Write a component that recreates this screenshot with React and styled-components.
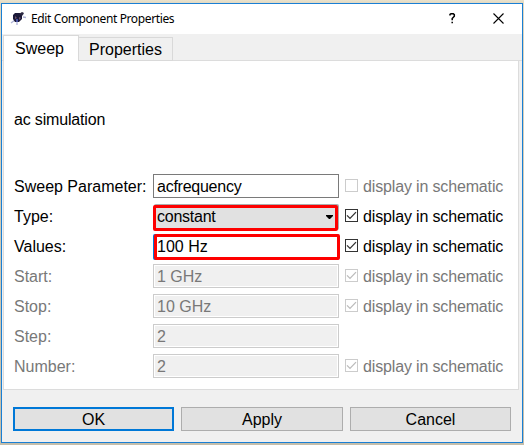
import React from "react";
import styled, { createGlobalStyle, css } from "styled-components";

const Global = createGlobalStyle`
  *, *::before, *::after { box-sizing: border-box; }
  body {
    margin: 0;
    background: #ddd4bc;
    font: 16px/20px "Liberation Sans", Arial, sans-serif;
    color: #000;
    overflow: hidden;
  }
`;

const Desktop = styled.div`
  width: 524px;
  height: 445px;
  padding: 3px 1px 2px;
  background: linear-gradient(#eae2cc, #e2d9c2 3px, #ddd4bc 40px, #c5beaa);
`;

const Window = styled.main`
  display: flex;
  flex-direction: column;
  width: 522px;
  height: 440px;
  border: 1px solid #1a7fd4;
  background: #f0f0f0;
`;

const TitleBar = styled.header`
  display: flex;
  align-items: center;
  height: 30px;
  padding-left: 8px;
  background: #fff;
`;

const Title = styled.h1`
  flex: 1;
  margin: 0 0 0 5px;
  font: 400 12px/16px "Noto Sans", "Open Sans", sans-serif;
  letter-spacing: -0.38px;
  white-space: nowrap;
`;

const TitleAction = styled.button`
  display: flex;
  align-items: center;
  justify-content: center;
  width: 46px;
  height: 30px;
  padding: 0 1px 1px 0;
  border: 0;
  background: none;
`;

const Tabs = styled.nav`
  display: flex;
  align-items: flex-end;
  height: 27px;
  padding-left: 1px;
  box-shadow: inset 0 -1px 0 #dcdcdc;
`;

const Tab = styled.button`
  height: 24px;
  width: 94px;
  padding: 0;
  border: 1px solid #d9d9d9;
  border-left: 0;
  background: #f0f0f0;
  font: inherit;
  line-height: 24px;
  color: #000;
  ${(p) =>
    p.$active &&
    css`
      width: 76px;
      height: 26px;
      padding-right: 3px;
      border-left: 1px solid #d9d9d9;
      border-bottom: 0;
      background: #fff;
      line-height: 25px;
    `}
`;

const Pane = styled.section`
  width: 516px;
  height: 329px;
  margin-left: 1px;
  padding: 49px 0 0 10px;
  border: 1px solid #dcdcdc;
  border-top: 0;
  background: #fff;
`;

const Description = styled.p`
  margin: 0 0 44px;
  letter-spacing: -0.17px;
`;

const Form = styled.div`
  display: grid;
  row-gap: 6px;
`;

const Row = styled.div`
  display: grid;
  grid-template-columns: 139px 186px 160px;
  grid-template-rows: 24px;
  height: 24px;
  color: ${(p) => (p.$disabled ? "#787878" : "#000")};
`;

const Label = styled.label`
  padding-top: 1px;
  white-space: nowrap;
  line-height: 24px;
`;

const Field = styled.div`
  display: flex;
  align-items: center;
  justify-content: space-between;
  height: 24px;
  padding: 2px 0 0 3px;
  border: 1px solid #7a7a7a;
  background: #fff;
  line-height: 20px;
  letter-spacing: -0.25px;
  ${(p) =>
    p.$disabled &&
    css`
      border-color: #ccc;
      background: #f0f0f0;
      box-shadow: inset 0 0 0 1px #fff;
      letter-spacing: 0;
    `}
`;

const MarkedSelect = styled(Field)`
  width: 185px;
  height: 26px;
  margin-top: 1px;
  padding: 0 1px 2px 1px;
  border: 3px solid #fe0000;
  border-radius: 2px;
  background: #e1e1e1;
  box-shadow: 1px -1px 0 #adadad;
  line-height: 18px;
`;

const MarkedInput = styled(Field)`
  width: 186px;
  height: 26px;
  padding: 0;
  margin-left: 1px;
  border: 3px solid #fe0000;
  border-radius: 2px;
  box-shadow: -1px 0 0 #0078d7;
  line-height: 20px;
  letter-spacing: 0;
`;

const Display = styled.label`
  display: flex;
  align-items: center;
  gap: 5px;
  height: 24px;
  margin-left: 6px;
  padding-top: 1px;
  white-space: nowrap;
  letter-spacing: -0.15px;
  color: ${(p) => (p.$muted ? "#787878" : "inherit")};
`;

const Box = styled.span`
  display: flex;
  flex: none;
  width: 13px;
  height: 13px;
  margin-top: -2px;
  border: 1px solid ${(p) => (p.$muted ? "#ccc" : "#333")};
  color: ${(p) => (p.$muted ? "#bcbcbc" : "#333")};
`;

const Actions = styled.footer`
  display: flex;
  gap: 7px;
  padding: 17px 0 0 11px;
`;

const Button = styled.button`
  width: ${(p) => p.$width}px;
  height: 24px;
  padding: 1px 0 0;
  border: ${(p) => (p.$primary ? "2px solid #0078d7" : "1px solid #adadad")};
  background: #e1e1e1;
  color: #000;
  font: inherit;
  line-height: 20px;
`;

const AppIcon = () => (
  <svg width="16" height="16" viewBox="0 0 16 16">
    <path d="M1 12l4-3M12 4l1.5-1.500M13 6l3 .5M7 11v3" fill="none" stroke="#aeb2d6" strokeWidth="1.3" />
    <path d="M3 4l2-2h5l2 2v4l-3 3H5L3 8z" fill="#1b1938" />
    <path d="M9 3l3-2 2 1-2 3z" fill="#2b2740" />
    <path d="M5 5l2 2-2 1zM9 6l2 1-2 2z" fill="#71536b" />
    <path d="M6 8h2v3H6z" fill="#454fa0" />
  </svg>
);

const CheckMark = () => (
  <svg width="11" height="11" viewBox="0 0 11 11">
    <path d="M1 5.4l3 3 6-6.3" fill="none" stroke="currentColor" strokeWidth="1.3" />
  </svg>
);

const rows = [
  { label: "Sweep Parameter:", value: "acfrequency", display: true, checked: false, muted: true },
  { label: "Type:", value: "constant", kind: "select", display: true, checked: true },
  { label: "Values:", value: "100 Hz", kind: "marked", display: true, checked: true },
  { label: "Start:", value: "1 GHz", disabled: true, display: true, checked: true },
  { label: "Stop:", value: "10 GHz", disabled: true, display: true, checked: true },
  { label: "Step:", value: "2", disabled: true },
  { label: "Number:", value: "2", disabled: true, display: true, checked: true },
];

const fieldKinds = { select: MarkedSelect, marked: MarkedInput };

function PropertyRow({ row }) {
  const Control = fieldKinds[row.kind] || Field;
  const muted = row.muted || row.disabled;
  return (
    <Row $disabled={row.disabled}>
      <Label>{row.label}</Label>
      <Control $disabled={row.disabled}>
        {row.value}
        {row.kind === "select" && (
          <svg width="8" height="5" viewBox="0 0 8 5">
            <path d="M0 0h7v1L4 4H3L0 1z" fill="#000" />
          </svg>
        )}
      </Control>
      {row.display && (
        <Display $muted={muted}>
          <Box $muted={muted}>{row.checked && <CheckMark />}</Box>
          display in schematic
        </Display>
      )}
    </Row>
  );
}

export default function App() {
  return (
    <Desktop>
      <Global />
      <Window>
        <TitleBar>
          <AppIcon />
          <Title>Edit Component Properties</Title>
          <TitleAction aria-label="Help">
            <svg width="7" height="11" viewBox="0 0 7 11">
              <path d="M1 2.6V1.5L2 .8h2.3l1 .9v1.6L3.2 5.5v1.7M3.2 8.7v1.6" fill="none" stroke="#000" strokeWidth="1.5" />
            </svg>
          </TitleAction>
          <TitleAction aria-label="Close">
            <svg width="11" height="11" viewBox="0 0 11 11">
              <path d="M.5.5l10 10M10.5.5l-10 10" stroke="#000" strokeWidth="1.1" />
            </svg>
          </TitleAction>
        </TitleBar>
        <Tabs>
          <Tab $active>Sweep</Tab>
          <Tab>Properties</Tab>
        </Tabs>
        <Pane>
          <Description>ac simulation</Description>
          <Form>
            {rows.map((row) => (
              <PropertyRow key={row.label} row={row} />
            ))}
          </Form>
        </Pane>
        <Actions>
          <Button $primary $width={161}>OK</Button>
          <Button $width={162}>Apply</Button>
          <Button $width={161}>Cancel</Button>
        </Actions>
      </Window>
    </Desktop>
  );
}
